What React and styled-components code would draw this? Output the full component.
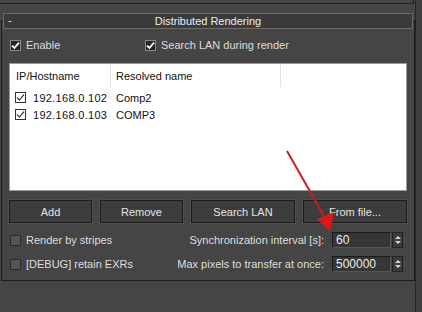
import React from "react";
import styled, { createGlobalStyle } from "styled-components";

const Global = createGlobalStyle`
  html, body {
    margin: 0;
    padding: 0;
    background: #454545;
    font-family: "Liberation Sans", Arial, sans-serif;
    font-size: 11px;
    color: #dedede;
  }
`;

const Page = styled.div`
  position: relative;
  width: 422px;
  height: 312px;
  display: flex;
  overflow: hidden;
`;

const Main = styled.div`
  width: 414px;
  padding-left: 1px;
`;

const ScrollStrip = styled.div`
  flex: 1;
  background: #3f3f3f;
  border-left: 1px solid #262626;
`;

const PrevPanel = styled.div`
  height: 3px;
  margin-left: -1px;
  width: 413px;
  border-bottom: 1px solid #1f1f1f;
  border-right: 1px solid #1f1f1f;
`;

const Rollout = styled.div`
  margin-top: 16px;
  border: 1px solid #1c1c1c;
  padding-bottom: 8px;
`;

const Header = styled.div`
  margin: -8px 1px 0 1px;
  height: 14px;
  border: 1px solid #6c6c6c;
  background: #3a3a3a;
  display: flex;
  align-items: center;
  justify-content: center;
  position: relative;
  color: #ececec;
`;

const Minus = styled.span`
  position: absolute;
  left: 4px;
  top: 0;
  line-height: 13px;
`;

const CheckRow = styled.div`
  display: flex;
  align-items: center;
  height: 14px;
  margin-top: 9px;
  padding-left: 8px;
`;

const CheckItem = styled.label`
  display: flex;
  align-items: center;
  gap: 5px;
  width: ${(p) => p.$w || "auto"};
`;

const Box = styled.span`
  width: 11px;
  height: 11px;
  box-sizing: border-box;
  display: flex;
  align-items: center;
  justify-content: center;
  flex: none;
  ${(p) =>
    p.$light
      ? `background: #fff; border: 1px solid #333;`
      : p.$checked
      ? `background: #262626; border: 1px solid #8a8a8a;`
      : `background: #555; border: 1px solid #2a2a2a;`}
`;

const ListBox = styled.div`
  margin: 11px 7px 0 7px;
  height: 128px;
  background: #ffffff;
  border: 1px solid #9a9a9a;
  box-sizing: border-box;
  color: #111;
`;

const Cols = styled.div`
  display: grid;
  grid-template-columns: 101px 170px 1fr;
`;

const HeadCell = styled.div`
  height: 23px;
  display: flex;
  align-items: center;
  padding-left: ${(p) => p.$pad || "5px"};
  border-right: ${(p) => (p.$last ? "none" : "1px solid #e2e2e2")};
`;

const Row = styled.div`
  display: grid;
  grid-template-columns: 101px 170px 1fr;
  height: 17px;
  align-items: center;
`;

const IpCell = styled.div`
  display: flex;
  align-items: center;
  gap: 7px;
  padding-left: 5px;
  letter-spacing: 0.3px;
`;

const NameCell = styled.div`
  padding-left: 5px;
`;

const ButtonBar = styled.div`
  display: grid;
  grid-template-columns: 83px 83px 104px 104px;
  gap: 8px;
  margin: 9px 7px 0 7px;
`;

const Button = styled.div`
  height: 23px;
  box-sizing: border-box;
  border: 1px solid #1d1d1d;
  box-shadow: 0 0 0 1px #4f4f4f;
  background: #3d3d3d;
  display: flex;
  align-items: center;
  justify-content: center;
  color: #e4e4e4;
`;

const OptRow = styled.div`
  display: flex;
  align-items: center;
  height: 16px;
  margin-top: ${(p) => p.$mt};
  padding: 0 11px 0 8px;
`;

const Spacer = styled.div`
  flex: 1;
`;

const FieldLabel = styled.span`
  margin-right: 8px;
`;

const Input = styled.div`
  width: 59px;
  height: 16px;
  box-sizing: border-box;
  background: #363636;
  border: 1px solid #1a1a1a;
  border-bottom-color: #555;
  border-right-color: #555;
  padding-left: 3px;
  display: flex;
  align-items: center;
  color: #ececec;
  font-size: 12px;
`;

const Spin = styled.div`
  width: 11px;
  height: 16px;
  margin-left: 1px;
  box-sizing: border-box;
  border: 1px solid #222;
  background: #3a3a3a;
  display: flex;
  flex-direction: column;
  align-items: center;
  justify-content: center;
  gap: 2px;
`;

const Arrow = styled.span`
  width: 0;
  height: 0;
  border-left: 3px solid transparent;
  border-right: 3px solid transparent;
  ${(p) =>
    p.$up
      ? `border-bottom: 3px solid #d8d8d8;`
      : `border-top: 3px solid #d8d8d8;`}
`;

const Overlay = styled.svg`
  position: absolute;
  left: 0;
  top: 0;
  pointer-events: none;
`;

function Check({ checked, light }) {
  return (
    <Box $checked={checked} $light={light}>
      {checked && (
        <svg width="9" height="9" viewBox="0 0 9 9">
          <path
            d="M1 4.6 L3.4 7 L8 1.6"
            fill="none"
            stroke={light ? "#222" : "#fff"}
            strokeWidth={light ? 1.1 : 1.8}
          />
        </svg>
      )}
    </Box>
  );
}

function Spinner({ value }) {
  return (
    <>
      <Input>{value}</Input>
      <Spin>
        <Arrow $up />
        <Arrow />
      </Spin>
    </>
  );
}

const hosts = [
  { ip: "192.168.0.102", name: "Comp2" },
  { ip: "192.168.0.103", name: "COMP3" },
];

export default function App() {
  return (
    <Page>
      <Global />
      <Main>
        <PrevPanel />
        <Rollout>
          <Header>
            <Minus>-</Minus>
            Distributed Rendering
          </Header>
          <CheckRow>
            <CheckItem $w="135px">
              <Check checked />
              Enable
            </CheckItem>
            <CheckItem>
              <Check checked />
              Search LAN during render
            </CheckItem>
          </CheckRow>
          <ListBox>
            <Cols>
              <HeadCell $pad="6px">IP/Hostname</HeadCell>
              <HeadCell>Resolved name</HeadCell>
              <HeadCell $last />
            </Cols>
            <div style={{ height: 2 }} />
            {hosts.map((h) => (
              <Row key={h.ip}>
                <IpCell>
                  <Check checked light />
                  {h.ip}
                </IpCell>
                <NameCell>{h.name}</NameCell>
              </Row>
            ))}
          </ListBox>
          <ButtonBar>
            <Button>Add</Button>
            <Button>Remove</Button>
            <Button>Search LAN</Button>
            <Button>From file...</Button>
          </ButtonBar>
          <OptRow $mt="9px">
            <CheckItem>
              <Check />
              Render by stripes
            </CheckItem>
            <Spacer />
            <FieldLabel>Synchronization interval [s]:</FieldLabel>
            <Spinner value="60" />
          </OptRow>
          <OptRow $mt="8px">
            <CheckItem>
              <Check />
              [DEBUG] retain EXRs
            </CheckItem>
            <Spacer />
            <FieldLabel>Max pixels to transfer at once:</FieldLabel>
            <Spinner value="500000" />
          </OptRow>
        </Rollout>
      </Main>
      <ScrollStrip />
      <Overlay width="422" height="312" viewBox="0 0 422 312">
        <line x1="287" y1="151" x2="324" y2="216" stroke="#c81e1e" strokeWidth="2" />
        <polygon points="317,219 334,212 330,231" fill="#e01818" />
      </Overlay>
    </Page>
  );
}
